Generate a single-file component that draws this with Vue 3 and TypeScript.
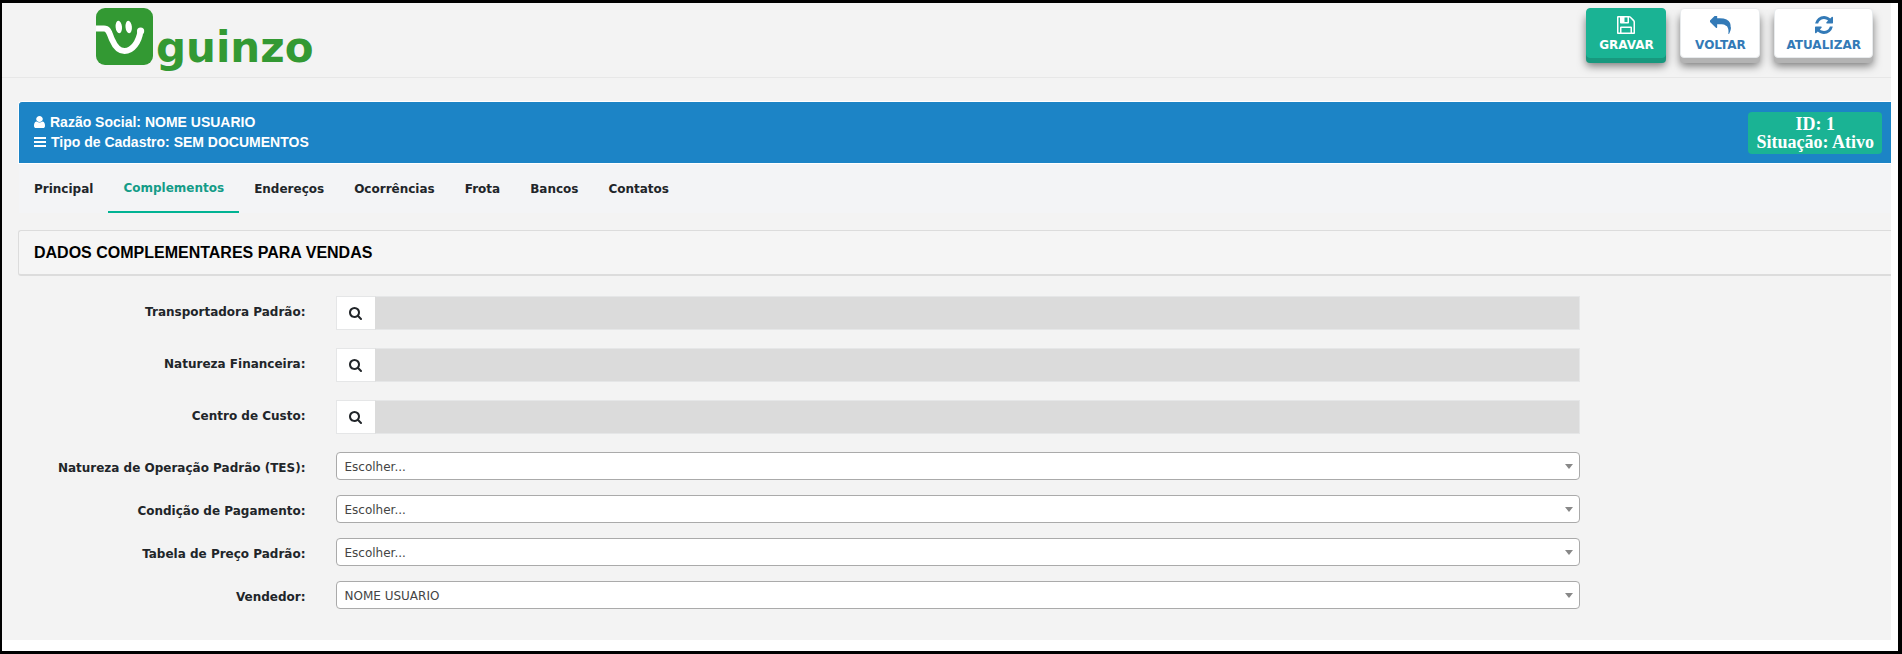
<script setup lang="ts">
import { ref } from 'vue'

interface Lookup {
  id: string
  label: string
  value: string
}

interface Choice extends Lookup {
  options: string[]
}

const tabs: string[] = ['Principal', 'Complementos', 'Endereços', 'Ocorrências', 'Frota', 'Bancos', 'Contatos']
const activeTab = ref('Complementos')

const lookups = ref<Lookup[]>([
  { id: 'transportadora', label: 'Transportadora Padrão:', value: '' },
  { id: 'natureza', label: 'Natureza Financeira:', value: '' },
  { id: 'centro', label: 'Centro de Custo:', value: '' },
])

const choices = ref<Choice[]>([
  { id: 'tes', label: 'Natureza de Operação Padrão (TES):', value: 'Escolher...', options: ['Escolher...'] },
  { id: 'pagamento', label: 'Condição de Pagamento:', value: 'Escolher...', options: ['Escolher...'] },
  { id: 'tabela', label: 'Tabela de Preço Padrão:', value: 'Escolher...', options: ['Escolher...'] },
  { id: 'vendedor', label: 'Vendedor:', value: 'NOME USUARIO', options: ['NOME USUARIO'] },
])
</script>

<template>
  <div class="frame">
    <div class="page">
      <header class="topbar">
        <a class="logo" href="#">
          <svg class="logo-mark" viewBox="0 0 57 57" aria-hidden="true">
            <rect width="57" height="57" rx="9" fill="#339933" />
            <path d="M0 20.500H8C13 20.500 13.500 26 16 31.500C19 38.500 22.500 43 28.500 43C36.500 43 43 34 44.500 23" fill="none" stroke="#fff" stroke-width="6" />
            <circle cx="44.600" cy="23" r="3.600" fill="#fff" />
            <ellipse cx="22.800" cy="19" rx="3.200" ry="6.200" fill="#fff" transform="rotate(-5 22.800 19)" />
            <ellipse cx="32.700" cy="19" rx="3.200" ry="6.200" fill="#fff" transform="rotate(-5 32.700 19)" />
          </svg>
          <span class="logo-name">guinzo</span>
        </a>
        <div class="actions">
          <button type="button" class="action primary">
            <svg width="18" height="18" viewBox="0 128 1536 1536" aria-hidden="true"><path fill="currentColor" d="M384 1536h768v-384h-768v384zm896 0h128v-896q0-14-10-38.500t-20-34.500l-281-281q-10-10-34-20t-39-10v416q0 40-28 68t-68 28h-576q-40 0-68-28t-28-68v-416h-128v1280h128v-416q0-40 28-68t68-28h832q40 0 68 28t28 68v416zm-384-928v-320q0-13-9.500-22.500t-22.500-9.500h-192q-13 0-22.500 9.500t-9.500 22.500v320q0 13 9.500 22.500t22.500 9.500h192q13 0 22.500-9.500t9.500-22.500zm640 32v928q0 40-28 68t-68 28h-1344q-40 0-68-28t-28-68v-1344q0-40 28-68t68-28h928q40 0 88 20t76 48l280 280q28 28 48 76t20 88z" /></svg>
            <span>GRAVAR</span>
          </button>
          <button type="button" class="action">
            <svg width="21" height="18" viewBox="0 128 1792 1536" aria-hidden="true"><path fill="currentColor" d="M1792 1120q0 166-127 451-3 7-10.500 24t-13.500 30-13 22q-12 17-28 17-15 0-23.500-10t-8.500-25q0-9 2.500-26.500t2.500-23.500q5-68 5-123 0-112-19.500-200.500t-54-153.500-89-111.500-114-78.500-140-49.500-156-23.500-170-7h-224v256q0 26-19 45t-45 19-45-19l-512-512q-19-19-19-45t19-45l512-512q19-19 45-19t45 19 19 45v256h224q713 0 875 403 53 134 53 333z" /></svg>
            <span>VOLTAR</span>
          </button>
          <button type="button" class="action">
            <svg width="18" height="18" viewBox="0 0 1536 1536" aria-hidden="true"><path fill="currentColor" d="M1511 928q0 5-1 7-64 268-268 434.500t-478 166.500q-146 0-282.500-55t-243.500-157l-129 129q-19 19-45 19t-45-19-19-45v-448q0-26 19-45t45-19h448q26 0 45 19t19 45-19 45l-137 137q71 66 161 102t187 36q134 0 250-65t186-179q11-17 53-117 8-23 30-23h192q13 0 22.500 9.500t9.500 22.500zm25-800v448q0 26-19 45t-45 19h-448q-26 0-45-19t-19-45 19-45l138-138q-148-137-349-137-134 0-250 65t-186 179q-11 17-53 117-8 23-30 23h-199q-13 0-22.500-9.500t-9.500-22.500v-7q65-268 270-434.500t480-166.500q146 0 284 55.500t245 156.500l130-129q19-19 45-19t45 19 19 45z" /></svg>
            <span>ATUALIZAR</span>
          </button>
        </div>
      </header>

      <main>
        <section class="banner">
          <div class="identity">
            <div class="line">
              <svg width="11" height="12" viewBox="256 128 1280 1536" preserveAspectRatio="none" aria-hidden="true"><path fill="currentColor" d="M1536 1399q0 109-62.500 187t-150.500 78h-854q-88 0-150.500-78t-62.500-187q0-85 8.500-160.500t31.500-152 58.500-131 94-89 134.500-34.500q131 128 313 128t313-128q76 0 134.500 34.500t94 89 58.500 131 31.500 152 8.500 160.500zm-256-887q0 159-112.500 271.500t-271.500 112.500-271.500-112.500-112.500-271.500 112.500-271.500 271.500-112.500 271.500 112.500 112.500 271.500z" /></svg>
              <span>Razão Social: NOME USUARIO</span>
            </div>
            <div class="line">
              <svg width="12" height="10" viewBox="0 0 12 10" aria-hidden="true"><path fill="currentColor" d="M0 0h12v2H0zM0 4h12v2H0zM0 8h12v2H0z" /></svg>
              <span>Tipo de Cadastro: SEM DOCUMENTOS</span>
            </div>
          </div>
          <div class="badge">ID: 1<br />Situação: Ativo</div>
        </section>

        <nav class="tabs">
          <a v-for="tab in tabs" :key="tab" href="#" class="tab" :class="{ active: tab === activeTab }" @click.prevent="activeTab = tab">{{ tab }}</a>
        </nav>

        <h2 class="title">DADOS COMPLEMENTARES PARA VENDAS</h2>

        <form class="fields" @submit.prevent>
          <div v-for="item in lookups" :key="item.id" class="row lookup-row">
            <label :for="item.id">{{ item.label }}</label>
            <div class="lookup">
              <button type="button" :aria-label="'Pesquisar ' + item.label">
                <svg width="13" height="13" viewBox="64 128 1664 1664" aria-hidden="true"><path fill="currentColor" d="M1216 832q0-185-131.500-316.500t-316.500-131.500-316.500 131.500-131.500 316.500 131.500 316.500 316.500 131.500 316.500-131.500 131.500-316.500zm512 832q0 52-38 90t-90 38q-54 0-90-38l-343-342q-179 124-399 124-143 0-273.500-55.500t-225-150-150-225-55.500-273.500 55.500-273.500 150-225 225-150 273.500-55.500 273.500 55.500 225 150 150 225 55.500 273.500q0 220-124 399l343 343q37 37 37 90z" /></svg>
              </button>
              <input :id="item.id" v-model="item.value" type="text" readonly />
            </div>
          </div>
          <div v-for="item in choices" :key="item.id" class="row">
            <label :for="item.id">{{ item.label }}</label>
            <div class="choice">
              <select :id="item.id" v-model="item.value">
                <option v-for="option in item.options" :key="option">{{ option }}</option>
              </select>
              <span class="arrow"></span>
            </div>
          </div>
        </form>
      </main>
    </div>
  </div>
</template>

<style>
body {
  margin: 0;
}
</style>

<style scoped>
*,
*::before,
*::after {
  box-sizing: border-box;
}

.frame {
  display: flex;
  min-height: 100vh;
  padding: 0 7px 11px 0;
  border: solid #000;
  border-width: 3px 4px 3px 2px;
  background: #fff;
  color: #212529;
  font-family: Verdana, 'DejaVu Sans', sans-serif;
  font-size: 12px;
}

.page {
  flex: 1;
  min-width: 0;
  overflow: hidden;
  background: #f3f3f3;
}

.topbar {
  display: flex;
  justify-content: space-between;
  align-items: flex-start;
  height: 75px;
  padding: 5px 18px 0 94px;
  border-bottom: 1px solid #e7e7e7;
}

.logo {
  display: flex;
  align-items: flex-start;
  gap: 3px;
  color: #339933;
  text-decoration: none;
}

.logo-mark {
  width: 57px;
  height: 57px;
}

.logo-name {
  padding-top: 14px;
  font-size: 42px;
  font-weight: 700;
  line-height: 52px;
}

.actions {
  display: flex;
  gap: 14px;
}

.action {
  display: flex;
  flex-direction: column;
  align-items: center;
  gap: 2px;
  min-width: 80px;
  height: 50px;
  padding: 7px 11px 0;
  border: 1px solid #e7eaec;
  border-radius: 4px;
  background: #fff;
  box-shadow: 0 5px 0 #b3b3b3, 0 8px 8px rgba(0, 0, 0, 0.5);
  color: #337ab7;
  font-family: inherit;
  font-size: 12px;
  font-weight: 700;
  line-height: 18px;
}

.action.primary {
  border-color: #1ab394;
  background: #1ab394;
  box-shadow: 0 5px 0 #18987e, 0 8px 8px rgba(0, 0, 0, 0.5);
  color: #fff;
}

.banner {
  display: flex;
  justify-content: space-between;
  align-items: flex-start;
  height: 63px;
  margin: 23px 0 0 16px;
  padding: 10px 9px 0 15px;
  border: solid #fff;
  border-width: 1px 0 1px 1px;
  border-top-left-radius: 4px;
  background: #1c84c6;
  color: #fff;
}

.identity {
  font-family: 'Liberation Sans', Arial, sans-serif;
  font-size: 14px;
  font-weight: 700;
  line-height: 20px;
}

.line {
  display: flex;
  align-items: center;
  gap: 5px;
}

.badge {
  padding: 3px 8px;
  border-radius: 4px;
  background: #1ab394;
  font-family: 'Liberation Serif', 'Times New Roman', serif;
  font-size: 18px;
  font-weight: 700;
  line-height: 18px;
  text-align: center;
}

.tabs {
  display: flex;
  height: 49px;
  margin-left: 17px;
  background: #f3f4f6;
}

.tab {
  padding: 0 15px;
  color: #212529;
  font-weight: 700;
  line-height: 50px;
  text-decoration: none;
}

.tab.active {
  border-bottom: 2px solid #00b393;
  color: #149c88;
  line-height: 48px;
}

.title {
  margin: 17px 0 0 16px;
  padding: 0 15px;
  border: 1px solid #dcdcdc;
  border-right: 0;
  border-bottom-width: 2px;
  border-radius: 3px 0 0 3px;
  background: #f5f5f5;
  color: #000;
  font-family: 'Liberation Sans', Arial, sans-serif;
  font-size: 16px;
  font-weight: 700;
  line-height: 43px;
}

.fields {
  margin: 20px -22px 0 0;
}

.row {
  display: grid;
  grid-template-columns: 2fr 8fr 2fr;
  margin-bottom: 15px;
}

.lookup-row {
  margin-bottom: 18px;
}

label {
  padding: 7px 15px 0;
  font-weight: 700;
  line-height: 18px;
  text-align: right;
}

.lookup {
  display: flex;
  height: 34px;
  margin: 0 15px;
}

.lookup button {
  display: flex;
  align-items: center;
  justify-content: center;
  width: 39px;
  padding: 0;
  border: 1px solid #e5e6e7;
  border-right: 0;
  background: #fff;
  color: #212529;
}

.lookup input {
  flex: 1;
  min-width: 0;
  padding: 0 8px;
  border: 1px solid #e5e6e7;
  border-left-color: #dbdbdb;
  background: #dbdbdb;
  font: inherit;
}

.choice {
  position: relative;
  height: 28px;
  margin: 0 15px;
}

select {
  width: 100%;
  height: 28px;
  padding: 2px 20px 0 8px;
  border: 1px solid #aaa;
  border-radius: 4px;
  appearance: none;
  background: #fff;
  color: #444;
  font: inherit;
}

.arrow {
  position: absolute;
  top: 12px;
  right: 7px;
  border: solid transparent;
  border-width: 5px 4px 0;
  border-top-color: #888;
  pointer-events: none;
}
</style>
